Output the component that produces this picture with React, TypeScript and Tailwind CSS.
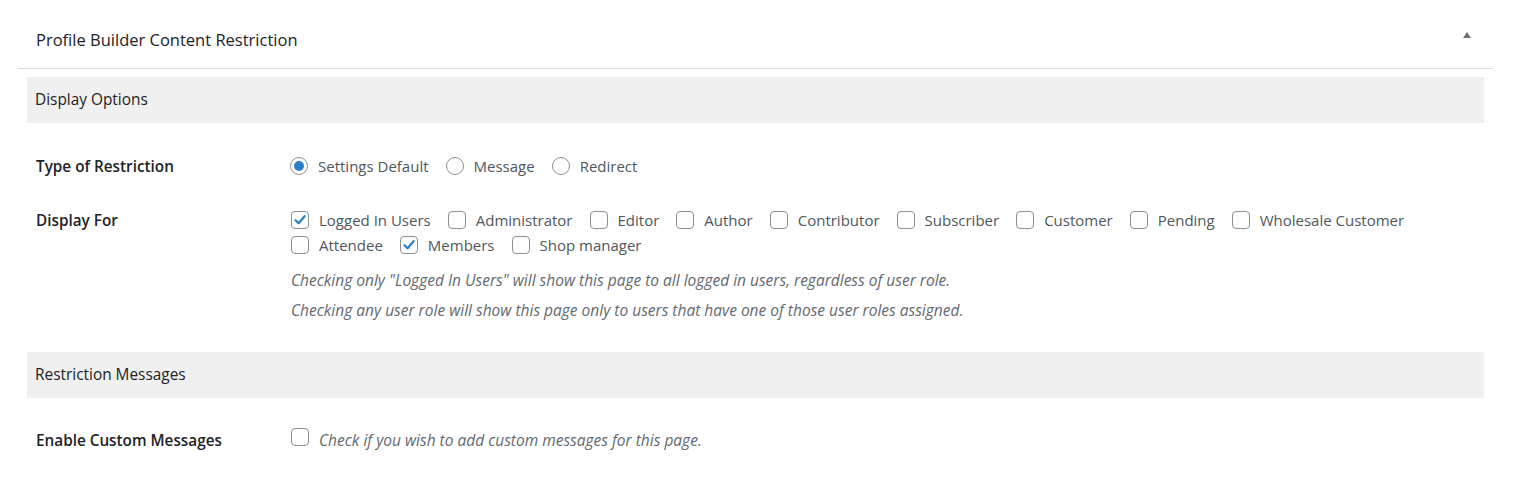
import React from "react";

const Radio = ({ checked, label }: { checked?: boolean; label: string }) => (
    <label className="flex items-center mr-[17px]">
        <span className="w-[18px] h-[18px] rounded-full border border-[#8c8f94] bg-white flex items-center justify-center shrink-0">
            {checked && <span className="w-[10px] h-[10px] rounded-full bg-[#2a7fc4]" />}
        </span>
        <span className="ml-[10px] text-[#50575e]">{label}</span>
    </label>
);

const Check = ({ checked, label }: { checked?: boolean; label: string }) => (
    <label className="flex items-center mr-[17px]">
        <span className="w-[18px] h-[18px] rounded-[4px] border border-[#8c8f94] bg-white flex items-center justify-center shrink-0">
            {checked && (
                <svg width="14" height="14" viewBox="0 0 14 14">
                    <path d="M2.5 7.2 L5.6 10.2 L11.6 3.2" fill="none" stroke="#2a7fc4" strokeWidth="2.2" strokeLinecap="round" strokeLinejoin="round" />
                </svg>
            )}
        </span>
        <span className="ml-[10px] text-[#50575e]">{label}</span>
    </label>
);

const Bar = ({ title }: { title: string }) => (
    <div className="h-[46px] bg-[#f0f0f0] pl-[8px] flex items-center text-[#1d2327] text-[15.4px]">{title}</div>
);

const App = () => {
    const rowOne = [
        ["Logged In Users", true],
        ["Administrator", false],
        ["Editor", false],
        ["Author", false],
        ["Contributor", false],
        ["Subscriber", false],
        ["Customer", false],
        ["Pending", false],
        ["Wholesale Customer", false],
    ] as const;
    const rowTwo = [
        ["Attendee", false],
        ["Members", true],
        ["Shop manager", false],
    ] as const;

    return (
        <div className="w-[1516px] h-[484px] bg-white font-['Open_Sans',sans-serif] text-[15px] leading-[24px] overflow-hidden">
            <div className="ml-[18px] w-[1475px]">
                <div className="h-[69px] border-b border-[#dcdcde] flex items-center justify-between pl-[18px] pr-[21px] pt-[12px]">
                    <h2 className="text-[#1d2327] text-[16.5px]">Profile Builder Content Restriction</h2>
                    <svg width="10" height="8" viewBox="0 0 10 8" className="mb-[10px]">
                        <path d="M1 7 L5 1 L9 7 Z" fill="#6b6e72" />
                    </svg>
                </div>
                <div className="px-[9px] pt-[8px]">
                    <Bar title="Display Options" />

                    <div className="flex mt-[31px]">
                        <div className="w-[263px] pl-[9px] font-semibold text-[#1d2327] text-[15.3px]">Type of Restriction</div>
                        <div className="flex">
                            <Radio checked label="Settings Default" />
                            <Radio label="Message" />
                            <Radio label="Redirect" />
                        </div>
                    </div>

                    <div className="flex mt-[30px]">
                        <div className="w-[263px] pl-[9px] font-semibold text-[#1d2327] text-[15.3px]">Display For</div>
                        <div className="pl-[1px]">
                            <div className="flex">
                                {rowOne.map(([l, c]) => (
                                    <Check key={l} label={l} checked={c} />
                                ))}
                            </div>
                            <div className="flex mt-[1px]">
                                {rowTwo.map(([l, c]) => (
                                    <Check key={l} label={l} checked={c} />
                                ))}
                            </div>
                            <p className="mt-[11px] italic text-[#646970] text-[15.5px]">
                                Checking only "Logged In Users" will show this page to all logged in users, regardless of user role.
                            </p>
                            <p className="mt-[6px] italic text-[#646970] text-[15.5px]">
                                Checking any user role will show this page only to users that have one of those user roles assigned.
                            </p>
                        </div>
                    </div>

                    <div className="mt-[30px]">
                        <Bar title="Restriction Messages" />
                    </div>

                    <div className="flex mt-[30px]">
                        <div className="w-[263px] pl-[9px] font-semibold text-[#1d2327] text-[15.3px]">Enable Custom Messages</div>
                        <div className="pl-[1px]">
                            <Check label="" />
                        </div>
                        <span className="-ml-[17px] italic text-[#646970] text-[15.5px]">
                            Check if you wish to add custom messages for this page.
                        </span>
                    </div>
                </div>
            </div>
        </div>
    );
};

export default App;
